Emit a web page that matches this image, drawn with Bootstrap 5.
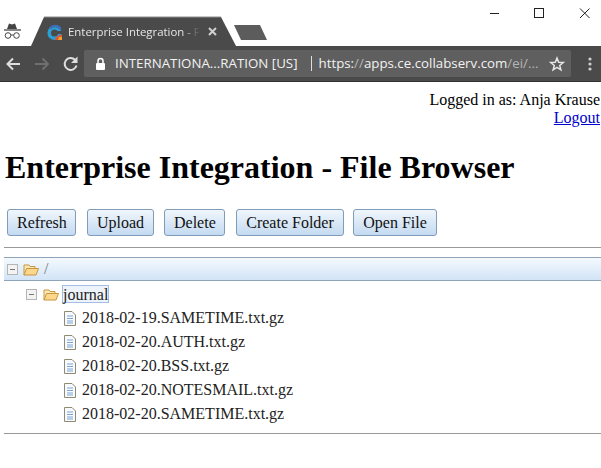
<!DOCTYPE html>
<html lang="en">
<head>
<meta charset="utf-8">
<title>Enterprise Integration - File Browser</title>
<link href="https://cdn.jsdelivr.net/npm/bootstrap@5.3.0/dist/css/bootstrap.min.css" rel="stylesheet">
<style>
html,body{margin:0;height:468px;overflow:hidden;background:#fff}
body{font-family:"Liberation Serif",serif;font-size:16px;line-height:18px;color:#000}
.win-strip{height:46px;position:relative;background:#fff}
.tab-art{position:absolute;left:0;top:0}
.tab-label{position:absolute;left:68px;top:24px;width:132px;height:16px;overflow:hidden;white-space:nowrap;color:#e6e6e6;font:11.4px/16px "Open Sans","Liberation Sans",sans-serif;-webkit-mask-image:linear-gradient(90deg,#000 86%,transparent)}
.tool-row{height:36px;background:#4a4a4a;border-bottom:1px solid #333;gap:0}
.tool-ico{flex:none;display:block}
.omni{flex:1;height:27px;margin-left:4px;margin-right:17px;background:#5f5f5f;border-radius:2px;color:#f2f2f2;font:13.3px/27px "Open Sans","Liberation Sans",sans-serif;white-space:nowrap;overflow:hidden}
.omni-sep{width:1px;height:15px;background:#ddd;margin:0 7px 0 13px}
.omni-dim{color:#b5b5b5}
.user-box{padding-top:9px;padding-right:1px;text-align:right}
.user-box a{color:#00c}
.page-title{font:700 32px/37px "Liberation Serif",serif;margin:22px 0 0 5px;color:#000}
.act-row{margin:23px 0 0 7px;gap:0}
.act-btn{height:27px;padding:0 9px;font:16px/23px "Liberation Serif",serif;color:#111;border:1px solid #7f9db9;border-radius:3px;background:linear-gradient(#f0f6fc,#c4daf1)}
.rule{height:0;border:0;border-top:1px solid #999;opacity:1;margin:0 0 0 4px}
.tree-head{margin:9px 0 0 4px;height:24px;border-top:1px solid #8ea4bb;border-bottom:1px solid #8ea4bb;background:linear-gradient(#f4f9fe,#d2e4f6);color:#777;gap:0}
.tree-row{height:24px;white-space:nowrap;color:#222}
.sel-name{border:1px solid #a3bde3;background:#edf3fb;padding:0;line-height:17px;height:18px;margin-left:3px}
.tree-ico{flex:none;display:block}
</style>
</head>
<body>
<div class="win-strip">
  <svg class="tab-art" width="601" height="46" viewBox="0 0 601 46">
    <path d="M31 46 44 17H221L236 46Z" fill="#4a4a4a"/>
    <path d="M44 17H221" stroke="#8c8c8c" fill="none"/>
    <path d="M234 25H260L267 40H241Z" fill="#5c5c5c"/>
    <path d="M7 29 9 23.500 12 24.500 15 23.500 17 29Z" fill="#444"/>
    <path d="M4 30H21" stroke="#444" stroke-width="1.300"/>
    <circle cx="8" cy="35.500" r="2.800" fill="none" stroke="#444"/>
    <circle cx="16.500" cy="35.500" r="2.800" fill="none" stroke="#444"/>
    <path d="M10.800 35H13.700" stroke="#444"/>
    <circle cx="54.500" cy="33" r="5.300" fill="none" stroke="#2a9fd6" stroke-width="3.600"/>
    <path d="M50 28.500A6.500 6.500 0 0 1 60.500 29" fill="none" stroke="#3d6fb8" stroke-width="2.500"/>
    <path d="M55 40H62V34.500L59 35.500 56 37Z" fill="#e2572b"/>
    <path d="M59 37H62V40H58Z" fill="#f0a030"/>
    <path d="M55 31H63V34H56Z" fill="#4a4a4a"/>
    <path d="M209 28 216 35M216 28 209 35" stroke="#d0d0d0" stroke-width="2"/>
    <path d="M490 13.500H499" stroke="#222" stroke-width="1"/>
    <rect x="534.500" y="8.500" width="9" height="9" fill="none" stroke="#222"/>
    <path d="M580 8.500 589.500 18M589.500 8.500 580 18" stroke="#222" fill="none"/>
  </svg>
  <div class="tab-label">Enterprise Integration - File Browser</div>
</div>
<div class="tool-row d-flex align-items-center">
  <svg class="tool-ico ms-1" style="margin-right:11px" width="18" height="18" viewBox="0 0 18 18"><path d="M16 9H4M9 3.500 3.500 9 9 14.500" fill="none" stroke="#dedede" stroke-width="2"/></svg>
  <svg class="tool-ico" style="margin-right:11px" width="18" height="18" viewBox="0 0 18 18"><path d="M2 9H15M9.500 3.500 15 9 9.500 14.500" fill="none" stroke="#6f6f6f" stroke-width="2"/></svg>
  <svg class="tool-ico" width="18" height="18" viewBox="0 0 18 18"><path d="M14.500 10.500A6 6 0 1 1 13 4.800" fill="none" stroke="#dedede" stroke-width="2"/><path d="M15.500 1.500V8H9Z" fill="#dedede"/></svg>
  <div class="omni d-flex align-items-center">
    <svg class="tool-ico" style="margin-left:11px;margin-right:9px" width="11" height="14" viewBox="0 0 11 14"><path d="M3 6V4A2.500 2.500 0 0 1 8 4V6" fill="none" stroke="#fff" stroke-width="1.500"/><rect x="1" y="6" width="9" height="7" rx="1" fill="#fff"/></svg>
    <span>INTERNATIONA...RATION [US]</span><span class="omni-sep"></span><span>https:<span class="omni-dim">//</span>apps.ce.collabserv.com<span class="omni-dim">/ei/...</span></span>
    <svg class="tool-ico ms-auto" style="margin-right:6px" width="16" height="16" viewBox="0 0 16 16"><path d="M8 2 9.700 6.200 14.200 6.500 10.700 9.400 11.900 13.800 8 11.400 4.100 13.800 5.300 9.400 1.800 6.500 6.300 6.200Z" fill="none" stroke="#e6e6e6" stroke-width="1.500"/></svg>
  </div>
  <svg class="tool-ico" style="margin-right:9px" width="4" height="16" viewBox="0 0 4 16"><circle cx="2" cy="3" r="1.600" fill="#d0d0d0"/><circle cx="2" cy="8" r="1.600" fill="#d0d0d0"/><circle cx="2" cy="13" r="1.600" fill="#d0d0d0"/></svg>
</div>
<div class="user-box">Logged in as: Anja Krause<br><a href="#">Logout</a></div>
<h1 class="page-title">Enterprise Integration - File Browser</h1>
<div class="act-row d-flex">
  <button type="button" class="act-btn" style="width:69px;margin-right:11px">Refresh</button>
  <button type="button" class="act-btn" style="width:67px;margin-right:10px">Upload</button>
  <button type="button" class="act-btn" style="width:61px;margin-right:11px">Delete</button>
  <button type="button" class="act-btn" style="width:108px;margin-right:9px">Create Folder</button>
  <button type="button" class="act-btn" style="width:84px">Open File</button>
</div>
<hr class="rule" style="margin-top:11px">
<div class="tree-head d-flex align-items-center">
  <svg class="tree-ico" style="margin-left:3px" width="11" height="11" viewBox="0 0 11 11"><rect x=".5" y=".5" width="10" height="10" fill="#f3f3f3" stroke="#b5b5b5"/><path d="M3 5.500H8" stroke="#777"/></svg>
  <svg class="tree-ico" style="margin-left:5px;margin-right:5px" width="16" height="13" viewBox="0 0 16 13"><path d="M1 12V2H6L7 3.500H12V5.500" fill="#fde8b8" stroke="#c9963f"/><path d="M1 12 3.500 5.500H15.500L13 12Z" fill="#fbd68b" stroke="#c9963f"/></svg>
  <span>/</span>
</div>
<div class="tree-row d-flex align-items-center" style="margin-top:1px">
  <svg class="tree-ico" style="margin-left:26px" width="11" height="11" viewBox="0 0 11 11"><rect x=".5" y=".5" width="10" height="10" fill="#f3f3f3" stroke="#b5b5b5"/><path d="M3 5.500H8" stroke="#777"/></svg>
  <svg class="tree-ico" style="margin-left:6px" width="16" height="13" viewBox="0 0 16 13"><path d="M1 12V2H6L7 3.500H12V5.500" fill="#fde8b8" stroke="#c9963f"/><path d="M1 12 3.500 5.500H15.500L13 12Z" fill="#fbd68b" stroke="#c9963f"/></svg>
  <span class="sel-name">journal</span>
</div>
<div class="tree-row d-flex align-items-center"><svg class="tree-ico" style="margin-left:64px;margin-right:6px" width="12" height="15" viewBox="0 0 12 15"><path d="M.5.500H8L11.500 4V14.500H.5Z" fill="#f7fbff" stroke="#8f8a70"/><path d="M3 5H9M3 7.500H9M3 10H9M3 12H9" stroke="#7fa3cf"/></svg>2018-02-19.SAMETIME.txt.gz</div>
<div class="tree-row d-flex align-items-center"><svg class="tree-ico" style="margin-left:64px;margin-right:6px" width="12" height="15" viewBox="0 0 12 15"><path d="M.5.500H8L11.500 4V14.500H.5Z" fill="#f7fbff" stroke="#8f8a70"/><path d="M3 5H9M3 7.500H9M3 10H9M3 12H9" stroke="#7fa3cf"/></svg>2018-02-20.AUTH.txt.gz</div>
<div class="tree-row d-flex align-items-center"><svg class="tree-ico" style="margin-left:64px;margin-right:6px" width="12" height="15" viewBox="0 0 12 15"><path d="M.5.500H8L11.500 4V14.500H.5Z" fill="#f7fbff" stroke="#8f8a70"/><path d="M3 5H9M3 7.500H9M3 10H9M3 12H9" stroke="#7fa3cf"/></svg>2018-02-20.BSS.txt.gz</div>
<div class="tree-row d-flex align-items-center"><svg class="tree-ico" style="margin-left:64px;margin-right:6px" width="12" height="15" viewBox="0 0 12 15"><path d="M.5.500H8L11.500 4V14.500H.5Z" fill="#f7fbff" stroke="#8f8a70"/><path d="M3 5H9M3 7.500H9M3 10H9M3 12H9" stroke="#7fa3cf"/></svg>2018-02-20.NOTESMAIL.txt.gz</div>
<div class="tree-row d-flex align-items-center"><svg class="tree-ico" style="margin-left:64px;margin-right:6px" width="12" height="15" viewBox="0 0 12 15"><path d="M.5.500H8L11.500 4V14.500H.5Z" fill="#f7fbff" stroke="#8f8a70"/><path d="M3 5H9M3 7.500H9M3 10H9M3 12H9" stroke="#7fa3cf"/></svg>2018-02-20.SAMETIME.txt.gz</div>
<hr class="rule" style="margin-top:7px">
</body>
</html>
